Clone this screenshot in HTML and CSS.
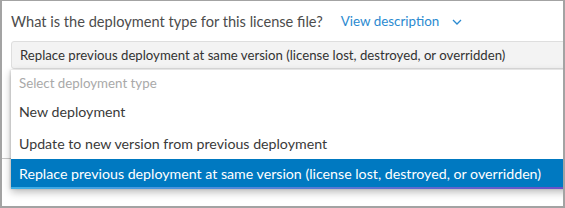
FILE: index.html
```html
<!DOCTYPE html>
<html>
<head>
<meta charset="utf-8">
<link rel="stylesheet" href="styles.css">
</head>
<body>
<div class="frame">
  <div class="field">
    <div class="question">
      <span class="label">What is the deployment type for this license file?</span>
      <a class="link">View description
        <svg class="chev" width="10" height="6" viewBox="0 0 10 6"><path d="M1 1 L5 5 L9 1" fill="none" stroke="#2b8ad0" stroke-width="1.3"/></svg>
      </a>
    </div>
    <div class="select-wrap">
      <div class="select">Replace previous deployment at same version (license lost, destroyed, or overridden)</div>
      <ul class="menu">
        <li class="item placeholder">Select deployment type</li>
        <li class="item">New deployment</li>
        <li class="item">Update to new version from previous deployment</li>
        <li class="item active">Replace previous deployment at same version (license lost, destroyed, or overridden)</li>
      </ul>
    </div>
    <div class="under"></div>
  </div>
</div>
</body>
</html>
```
FILE: styles.css
```css
html, body {
  margin: 0;
  padding: 0;
  background: #ffffff;
}
.frame {
  width: 565px;
  height: 208px;
  box-sizing: border-box;
  border-style: solid;
  border-color: #a3a3a3;
  border-width: 1px 2px 2px 2px;
  overflow: hidden;
  font-family: "Lato", "Open Sans", sans-serif;
}
.field {
  padding: 0 0 0 9px;
}
.question {
  display: flex;
  align-items: center;
  height: 40px;
}
.label {
  font-size: 14.6px;
  color: #4c4c4c;
}
.link {
  margin-left: 18px;
  font-size: 13.4px;
  color: #2b8ad0;
  display: flex;
  align-items: center;
}
.chev {
  margin-left: 13px;
  margin-top: 2px;
}
.select-wrap {
  position: relative;
}
.select {
  height: 28px;
  box-sizing: border-box;
  margin-right: -10px;
  border: 1px solid #dedede;
  border-radius: 3px;
  background: #f3f3f3;
  font-size: 13.2px;
  color: #323232;
  padding-left: 8px;
  display: flex;
  align-items: center;
}
.menu {
  position: absolute;
  left: 0;
  right: -10px;
  top: 29px;
  margin: 0;
  padding: 0;
  list-style: none;
  background: #fff;
  border-style: solid;
  border-image: linear-gradient(90deg, #3fb0e6, #6a4fc8) 1;
  border-width: 0 0 2px 0;
  box-shadow: 0 3px 8px rgba(0,0,0,0.28), -1px 0 2px rgba(0,0,0,0.15);
}
.item {
  height: 32px;
  display: flex;
  align-items: center;
  padding-left: 8px;
  font-size: 14.2px;
  color: #3a3a3a;
  white-space: nowrap;
}
.item.placeholder {
  height: 25px;
  color: #a9a9a9;
  font-size: 13.3px;
}
.item.active {
  height: 28px;
  background: #0079c1;
  color: #ffffff;
}
.under {
  margin-top: 89px;
  margin-left: -9px;
  border-top: 1px solid #c8c8c8;
}
```
